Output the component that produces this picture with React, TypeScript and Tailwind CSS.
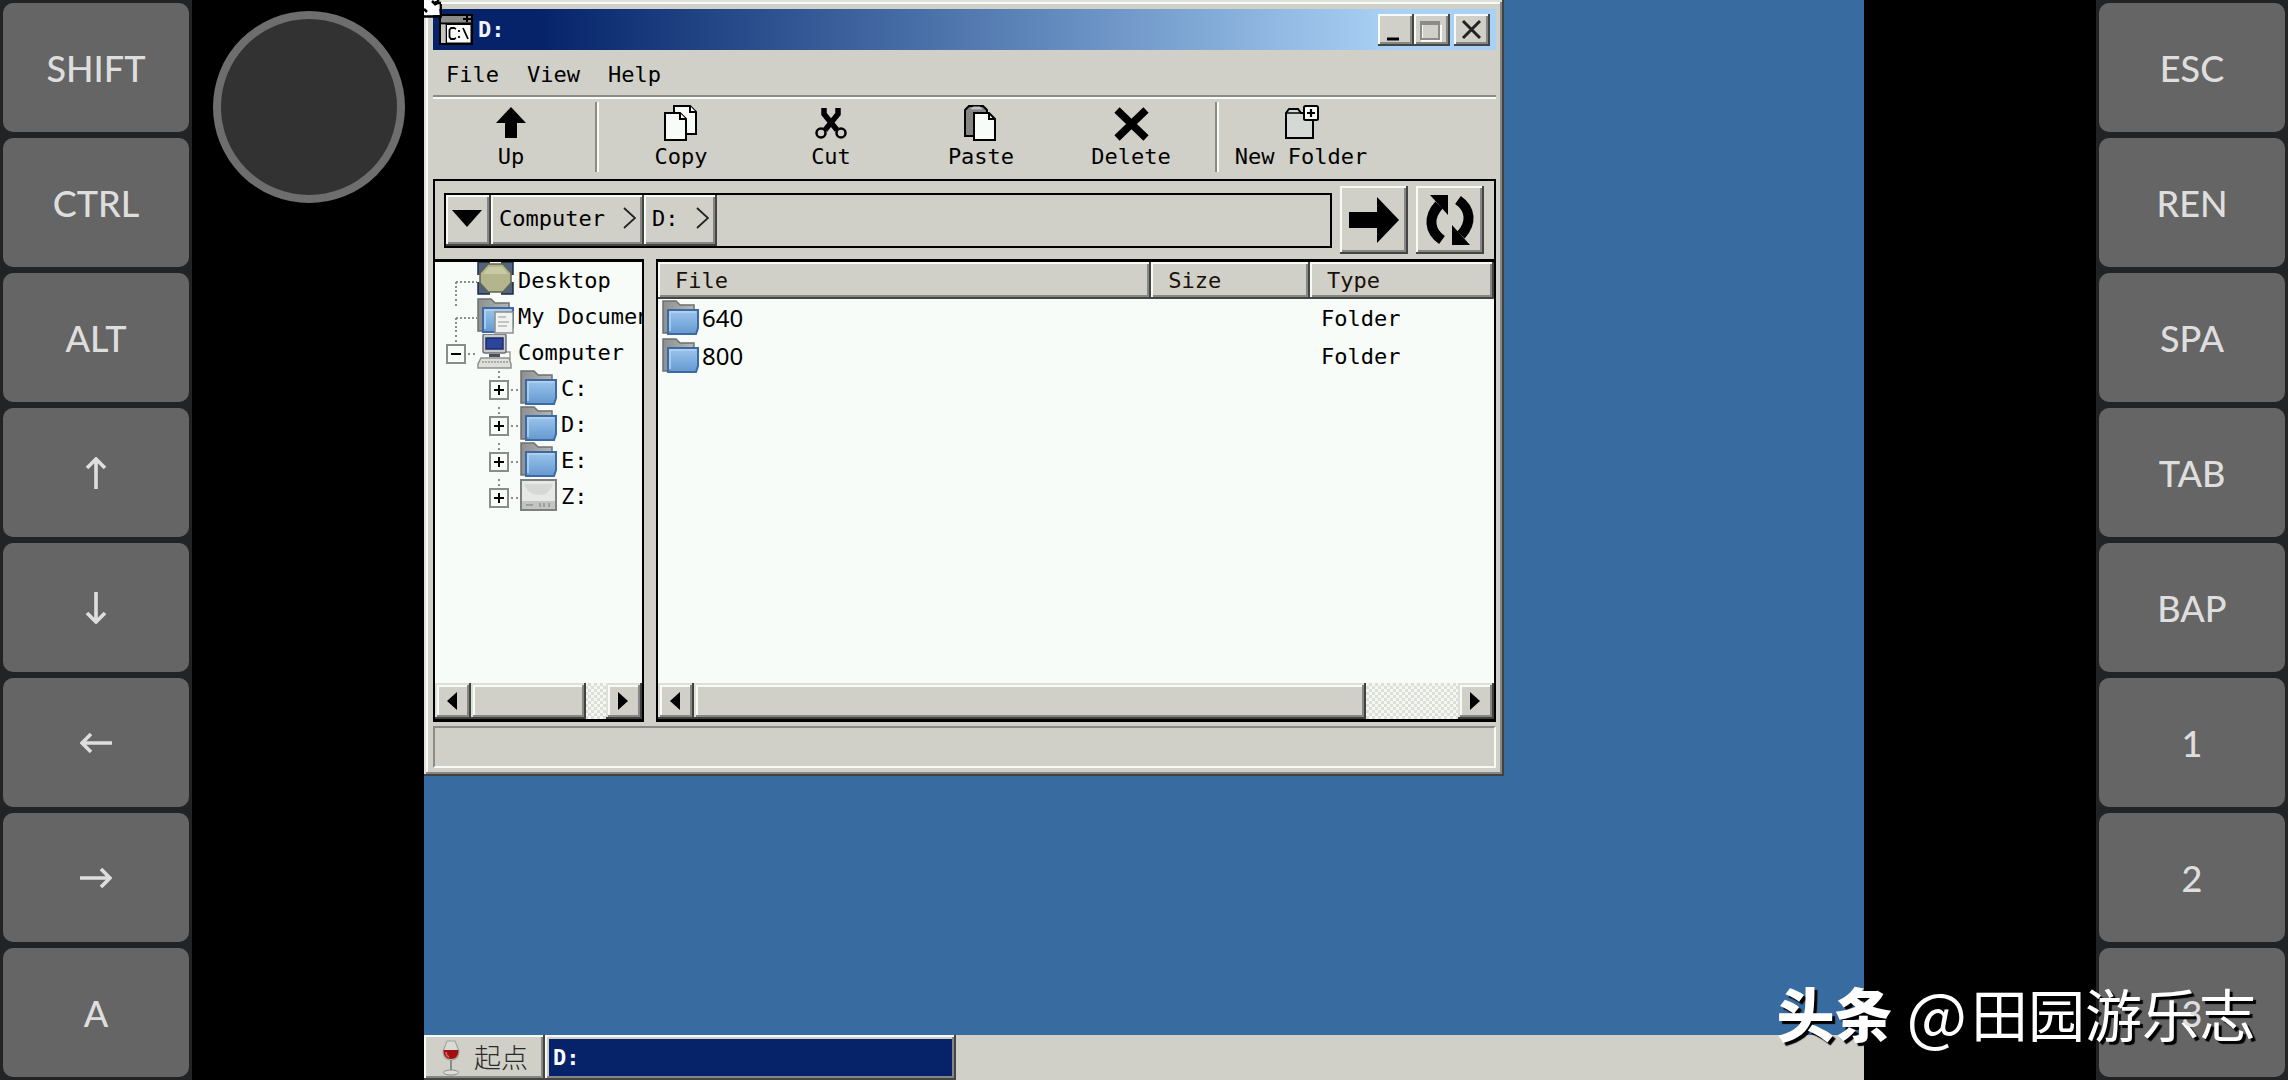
import { useState } from "react";
import type { ReactNode } from "react";
import clsx from "clsx";

const LEFT_KEYS = ["SHIFT", "CTRL", "ALT", "↑", "↓", "←", "→", "A"];
const RIGHT_KEYS = ["ESC", "REN", "SPA", "TAB", "BAP", "1", "2", "3"];

const ARROWS: Record<string, string> = {
  "↑": "M16 32V3M7 11l9-9 9 9",
  "↓": "M16 0v29M7 21l9 9 9-9",
  "←": "M32 16H3M11 7l-9 9 9 9",
  "→": "M0 16h29M21 7l9 9-9 9",
};

const FILES = [
  { name: "640", size: "", type: "Folder" },
  { name: "800", size: "", type: "Folder" },
];

const RAISED =
  "bg-[#d0d0c8] shadow-[inset_-2px_-2px_0_#404240,inset_2px_2px_0_#dedfd8,inset_-4px_-4px_0_#868784,inset_4px_4px_0_#f8fbf5]";
const BUTTON = "bg-[#d0d0c8] shadow-[inset_-2px_-2px_0_#444644,inset_2px_2px_0_#f8fbf5,inset_-4px_-4px_0_#868784]";

function KeyColumn({ keys }: { keys: string[] }) {
  return (
    <div className="w-48 shrink-0 grid grid-rows-8 gap-[6px] p-[3px] bg-[#222325]">
      {keys.map((k) => (
        <button key={k} aria-label={k} className="flex items-center justify-center rounded-[10px] bg-[#656565] text-[#dedede] text-4xl font-medium">
          <span className="relative z-20">
            {ARROWS[k] ? (
              <svg width="32" height="32" viewBox="0 0 32 32" fill="none" stroke="currentColor" strokeWidth="3.600">
                <path d={ARROWS[k]} />
              </svg>
            ) : (
              k
            )}
          </span>
        </button>
      ))}
    </div>
  );
}

/* ---- icons ---- */

function UpIcon() {
  return (
    <svg width="36" height="36" viewBox="0 0 36 36">
      <path d="M18 2l15 16h-9v15H12V18H3z" fill="#000" />
    </svg>
  );
}

function CopyIcon() {
  return (
    <svg width="36" height="36" viewBox="0 0 36 36" fill="#f8fcf8" stroke="#000" strokeWidth="2">
      <path d="M11 1h16l6 6v22H11z" />
      <path d="M27 1v6h6" />
      <path d="M2 8h15l6 6v21H2z" />
      <path d="M17 8v6h6" />
    </svg>
  );
}

function CutIcon() {
  return (
    <svg width="36" height="36" viewBox="0 0 36 36" fill="none" stroke="#000">
      <path d="M11 3v6l13 16M25 3v6L12 25" strokeWidth="5.500" />
      <circle cx="8" cy="28" r="4.500" strokeWidth="2.500" />
      <circle cx="28" cy="28" r="4.500" strokeWidth="2.500" />
    </svg>
  );
}

function PasteIcon() {
  return (
    <svg width="36" height="36" viewBox="0 0 36 36" stroke="#000" strokeWidth="2">
      <path d="M2 5l4-4h14l4 4v26H2z" fill="#858683" />
      <path d="M8 4l2-2h7l2 2z" fill="#d0d0c8" stroke="#b8b8b2" strokeWidth="1" />
      <path d="M11 8h15l6 6v21H11z" fill="#f8fcf8" />
      <path d="M26 8v6h6" fill="none" />
    </svg>
  );
}

function DeleteIcon() {
  return (
    <svg width="36" height="36" viewBox="0 0 36 36">
      <path d="M4 5l29 28M33 5L4 33" stroke="#000" strokeWidth="7.500" />
    </svg>
  );
}

function NewFolderIcon() {
  return (
    <svg width="36" height="36" viewBox="0 0 36 36" stroke="#000" strokeWidth="2">
      <path d="M3 33V8l3-4h9l3 4h12v25z" fill="#d5d9d6" />
      <path d="M4 8h14" strokeWidth="1.500" />
      <rect x="21" y="1" width="14" height="14" rx="1.500" fill="#f8fcf8" />
      <path d="M28 4v8M24 8h8" strokeWidth="2.200" />
    </svg>
  );
}

function FolderIcon({ doc = false }: { doc?: boolean }) {
  return (
    <svg className="shrink-0" width="37" height="36" viewBox="0 0 37 36">
      <defs>
        <linearGradient id="folderFront" x1="0" y1="0" x2="0" y2="1">
          <stop offset="0" stopColor="#9fc4ea" />
          <stop offset="0.5" stopColor="#7fb0e0" />
          <stop offset="1" stopColor="#6698cf" />
        </linearGradient>
        <linearGradient id="folderBack" x1="0" y1="0" x2="1" y2="0">
          <stop offset="0" stopColor="#8d8f90" />
          <stop offset="1" stopColor="#b5b7b7" />
        </linearGradient>
      </defs>
      <path d="M1 33V1h13l4 4h14v6H6v22z" fill="url(#folderBack)" stroke="#6d6f70" strokeWidth="1.500" />
      <path d="M6 10h30v18l-2 6H6z" fill="url(#folderFront)" stroke="#3b6aa5" strokeWidth="2" />
      <path d="M8 31V12h26" fill="none" stroke="#b6d3f0" strokeWidth="1.500" />
      {doc && (
        <g>
          <path d="M18 14h18v21H18z" fill="#f1f3f0" stroke="#8c8e8c" strokeWidth="1.500" />
          <path d="M21 19h8M21 24h11M21 28h9" stroke="#b4b6b3" strokeWidth="1.500" />
        </g>
      )}
    </svg>
  );
}

function DesktopIcon() {
  return (
    <svg className="shrink-0" width="37" height="36" viewBox="0 0 37 36">
      <path d="M1 0h35v32H1z" fill="#53627f" stroke="#1d2a45" strokeWidth="1.500" />
      <path d="M13 0h11v3H13zM13 29h11v4H13zM0 13h3v7H0zM34 13h3v7h-3z" fill="#f8fcf8" />
      <path d="M11 2h15l8 9v10l-8 9H11l-8-9V11z" fill="#b3b58c" stroke="#5e6350" strokeWidth="1.500" />
      <path d="M12 5h13l6 7H6z" fill="#c9caa4" />
    </svg>
  );
}

function ComputerIcon() {
  return (
    <svg className="shrink-0" width="37" height="36" viewBox="0 0 37 36">
      <path d="M27 18h6v8" fill="none" stroke="#9a9c99" strokeWidth="1.500" />
      <rect x="6" y="0" width="23" height="19" rx="2" fill="#c9cbd0" stroke="#6d7078" strokeWidth="1.500" />
      <rect x="9" y="4" width="17" height="11" fill="#2b459b" stroke="#1c2c66" strokeWidth="1.500" />
      <path d="M12 20h11v3H12z" fill="#4d4f52" />
      <path d="M4 24h28l2 6v4H1v-4z" fill="#dedfd9" stroke="#8f918e" strokeWidth="1.500" />
      <path d="M5 28h26" stroke="#a9aba8" strokeWidth="2" strokeDasharray="2 1" />
    </svg>
  );
}

function DriveIcon() {
  return (
    <svg className="shrink-0" width="37" height="36" viewBox="0 0 37 36">
      <rect x="1" y="2" width="35" height="30" fill="#e6e8e5" stroke="#7e807e" strokeWidth="2" />
      <path d="M4 6h29c-3 8-8 11-14 11S7 14 4 6z" fill="#d6d8d5" />
      <path d="M2 23h33v8H2z" fill="#c3c5c2" />
      <path d="M6 27h7M20 25v4M24 25v4M29 25v4" stroke="#9d9f9c" strokeWidth="2" />
    </svg>
  );
}

function ConsoleIcon() {
  return (
    <svg width="34" height="31" viewBox="0 0 34 31">
      <rect x="1" y="1" width="32" height="29" fill="#8a8b88" stroke="#000" strokeWidth="2" />
      <path d="M1 9.500h32" stroke="#000" strokeWidth="2" />
      <path d="M24 5h8M28 2v6" stroke="#000" strokeWidth="2" />
      <path d="M2 10.500h4V29H2z" fill="#c2c4c0" />
      <path d="M7.500 10.500H32V29H7.500z" fill="#f8fcf8" stroke="#000" />
      <path d="M17 15l-2-1h-3l-1.500 2v7l1.500 2h3l2-1M20 16v2M20 22v2M24 14l5 11" fill="none" stroke="#000" strokeWidth="1.800" />
    </svg>
  );
}

function WineIcon() {
  return (
    <svg width="18" height="36" viewBox="0 0 18 36">
      <path d="M5 1h8l4 10c0 6-3 9-8 9s-8-3-8-9z" fill="#d9dbd7" stroke="#a0a29f" strokeWidth="1.200" />
      <path d="M1.500 10h15c0 6-2.500 9-7.500 9s-7.500-3-7.500-9z" fill="#a01010" />
      <path d="M4 12c0 2 1 4 3 5" fill="none" stroke="#d96a6a" strokeWidth="1.500" />
      <path d="M9 20v12" stroke="#8b8d8a" strokeWidth="2" />
      <ellipse cx="9" cy="32.500" rx="7.500" ry="2.500" fill="#dcdeda" stroke="#8b8d8a" />
    </svg>
  );
}

function RefreshIcon() {
  return (
    <svg width="52" height="52" viewBox="0 0 52 52" fill="none" stroke="#000" strokeWidth="10">
      <path d="M18 46C5 37 4 23 15 11" />
      <path d="M34 6c13 9 14 23 3 35" />
      <path d="M6 1h18v20z" fill="#000" stroke="none" />
      <path d="M46 51H28V31z" fill="#000" stroke="none" />
    </svg>
  );
}

/* ---- window parts ---- */

function ToolButton({ label, children }: { label: string; children: ReactNode }) {
  return (
    <button className="w-[150px] flex flex-col items-center gap-1">
      {children}
      <span className="leading-6 whitespace-nowrap">{label}</span>
    </button>
  );
}

function ToolSeparator() {
  return <div className="w-1 h-[70px] ml-[9px] mr-[7px] border-l-2 border-r-2 border-l-[#8b8b88] border-r-[#f8fbf5]" />;
}

type Branch = "leaf" | "open" | "closed";

function TreeRow({ label, branch, child, first, icon }: { label: string; branch: Branch; child?: boolean; first?: boolean; icon: ReactNode }) {
  const lines = (
    <svg width="42" height="36" viewBox="0 0 42 36" fill="none" stroke="#8b8d8b" strokeWidth="2">
      {!(first && branch === "leaf") && <path d="M21 1v10" strokeDasharray="2 3" />}
      {branch === "leaf" ? (
        <path d="M21 20v16M21 20h21" strokeDasharray="2 2" />
      ) : (
        <>
          <path d="M33 20h9" strokeDasharray="2 3" />
          <rect x="12" y="11" width="18" height="18" />
          <path d="M16 20h10" stroke="#000" />
          {branch === "closed" && <path d="M21 15v10" stroke="#000" />}
        </>
      )}
    </svg>
  );
  return (
    <li className={clsx("flex items-center h-9 whitespace-nowrap", child && "pl-[43px]")}>
      {branch === "leaf" ? <span>{lines}</span> : <button aria-label={`Toggle ${label}`}>{lines}</button>}
      {icon}
      <a href="#" className="pl-1">{label}</a>
    </li>
  );
}

function HScroll({ thumb }: { thumb: string }) {
  return (
    <div className="flex h-9 shrink-0 bg-[repeating-conic-gradient(#dcded8_0_25%,#f4f7f2_0_50%)] bg-[length:6px_6px]">
      <button aria-label="Scroll left" className={clsx("w-9 shrink-0 flex items-center justify-center pr-[3px]", RAISED)}>
        <svg width="10" height="18" viewBox="0 0 10 18"><path d="M10 0v18L0 9z" /></svg>
      </button>
      <div className="flex-1">
        <div className={clsx("h-full", thumb, RAISED)} />
      </div>
      <button aria-label="Scroll right" className={clsx("w-9 shrink-0 flex items-center justify-center pr-[3px]", RAISED)}>
        <svg width="10" height="18" viewBox="0 0 10 18"><path d="M0 0v18l10-9z" /></svg>
      </button>
    </div>
  );
}

function TitleBar() {
  return (
    <header className="flex items-center h-[41px] pl-[6px] pr-[6px] bg-linear-to-r from-[#06236a] from-10% to-[#a9d1f5] to-90%">
      <ConsoleIcon />
      <h1 className="flex-1 pl-[5px] font-bold text-[#f0f4ff]">D:</h1>
      <button aria-label="Minimize" className={clsx("w-9 h-8", BUTTON)}>
        <svg width="36" height="32" viewBox="0 0 36 32"><path d="M9 25h12" stroke="#000" strokeWidth="3" /></svg>
      </button>
      <button aria-label="Maximize" className={clsx("w-9 h-8 mr-1", BUTTON)}>
        <svg width="36" height="32" viewBox="0 0 36 32" fill="none">
          <path d="M8 11v16h19V11" stroke="#f8fbf5" strokeWidth="2" />
          <path d="M7 10v15h18V10" stroke="#8b8b88" strokeWidth="2" />
          <path d="M6 9h20" stroke="#8b8b88" strokeWidth="4" />
        </svg>
      </button>
      <button aria-label="Close" className={clsx("w-9 h-8", BUTTON)}>
        <svg width="36" height="32" viewBox="0 0 36 32"><path d="M9 7l17 17M26 7L9 24" stroke="#222" strokeWidth="3" /></svg>
      </button>
    </header>
  );
}

function Crumb({ label }: { label: string }) {
  return (
    <button className={clsx("flex items-center gap-[18px] pl-2 pr-2 pb-1", BUTTON)}>
      {label}
      <svg width="13" height="22" viewBox="0 0 13 22" fill="none" stroke="#222" strokeWidth="1.800">
        <path d="M1 1l11 10L1 21" />
      </svg>
    </button>
  );
}

function Explorer() {
  const [files] = useState(FILES);
  return (
    <section className={clsx("relative w-3/4 p-[9px] pb-2 pr-2", RAISED)}>
      <TitleBar />

      <nav className="flex items-center gap-7 h-[45px] pt-1 px-[13px]">
        <button>File</button>
        <button>View</button>
        <button>Help</button>
      </nav>
      <div className="h-1 border-t-2 border-b-2 border-t-[#8b8b88] border-b-[#f8fbf5]" />

      <div className="flex items-center h-[80px] pl-[3px] pb-1">
        <ToolButton label="Up"><UpIcon /></ToolButton>
        <ToolSeparator />
        <ToolButton label="Copy"><CopyIcon /></ToolButton>
        <ToolButton label="Cut"><CutIcon /></ToolButton>
        <ToolButton label="Paste"><PasteIcon /></ToolButton>
        <ToolButton label="Delete"><DeleteIcon /></ToolButton>
        <ToolSeparator />
        <ToolButton label="New Folder"><NewFolderIcon /></ToolButton>
      </div>

      <div className="flex items-center gap-2 h-20 pl-[9px] pr-[10px] border-2 border-black border-b-0">
        <div className="flex flex-1 h-[55px] border-2 border-black">
          <button aria-label="History" className={clsx("w-[45px] flex items-center justify-center pr-1 pb-1", BUTTON)}>
            <svg width="30" height="17" viewBox="0 0 30 17"><path d="M0 0h30L15 17z" /></svg>
          </button>
          <Crumb label="Computer" />
          <Crumb label="D:" />
        </div>
        <button aria-label="Go" className={clsx("w-[68px] h-[68px] flex items-center justify-center", BUTTON)}>
          <svg width="50" height="46" viewBox="0 0 50 46"><path d="M0 15h28V0l22 23-22 23V31H0z" /></svg>
        </button>
        <button aria-label="Refresh" className={clsx("w-[68px] h-[68px] flex items-center justify-center", BUTTON)}>
          <RefreshIcon />
        </button>
      </div>

      <div className="flex gap-3 h-[463px]">
        <div className="w-[211px] shrink-0 flex flex-col border-2 border-t-3 border-b-3 border-black bg-[#f8fcf8]">
          <ul className="flex-1 overflow-hidden">
            <TreeRow label="Desktop" branch="leaf" first icon={<DesktopIcon />} />
            <TreeRow label="My Documents" branch="leaf" icon={<FolderIcon doc />} />
            <TreeRow label="Computer" branch="open" icon={<ComputerIcon />} />
            <TreeRow label="C:" branch="closed" child icon={<FolderIcon />} />
            <TreeRow label="D:" branch="closed" child icon={<FolderIcon />} />
            <TreeRow label="E:" branch="closed" child icon={<FolderIcon />} />
            <TreeRow label="Z:" branch="closed" child icon={<DriveIcon />} />
          </ul>
          <HScroll thumb="w-[85%]" />
        </div>

        <div className="flex-1 min-w-0 flex flex-col border-2 border-t-3 border-b-3 border-black bg-[#f8fcf8]">
          <div className="flex-1">
            <table className="w-full table-fixed text-left">
              <thead>
                <tr className="h-[37px] text-[#1c100c]">
                  <th className={clsx("w-[59%] pl-[17px] font-normal", BUTTON)}>File</th>
                  <th className={clsx("w-[19%] pl-[17px] font-normal", BUTTON)}>Size</th>
                  <th className={clsx("pl-[17px] font-normal", BUTTON)}>Type</th>
                </tr>
              </thead>
              <tbody>
                {files.map((f) => (
                  <tr key={f.name} className="h-[38px]">
                    <td className="pl-1">
                      <a href="#" className="flex items-center gap-[3px] font-['Noto_Sans',sans-serif] text-2xl leading-9">
                        <FolderIcon />
                        {f.name}
                      </a>
                    </td>
                    <td>{f.size}</td>
                    <td className="pl-[11px]">{f.type}</td>
                  </tr>
                ))}
              </tbody>
            </table>
          </div>
          <HScroll thumb="w-[88%]" />
        </div>
      </div>

      <footer className="mt-1 h-[42px] border-2 border-t-[#8b8b88] border-l-[#8b8b88] border-b-[#f8fbf5] border-r-[#f8fbf5]" />

      {/* mouse pointer parked in the corner */}
      <svg className="absolute left-0 top-0" width="18" height="18" viewBox="0 0 18 18">
        <path d="M0 0h14v1l2 14H0z" fill="#fff" />
        <path d="M0 16.500h17V4M14 0v3h3" fill="none" stroke="#000" strokeWidth="2.500" />
        <path d="M0 9l3 3M8 1l4 4M12 1v4" fill="none" stroke="#000" strokeWidth="2.500" />
      </svg>
    </section>
  );
}

function Taskbar() {
  return (
    <footer className="flex h-[45px] bg-[#d0d0c8]">
      <button className={clsx("w-[121px] flex items-center gap-[14px] pl-[18px] font-['Noto_Sans_CJK_SC',sans-serif] text-[27px] font-light text-[#2a2a28]", BUTTON)}>
        <WineIcon />
        起点
      </button>
      <button className={clsx("w-[411px] p-1", BUTTON)}>
        <span className="flex items-center h-full pl-1 bg-[#06236a] font-bold text-white">D:</span>
      </button>
    </footer>
  );
}

export default function App() {
  return (
    <div className="relative flex h-screen overflow-hidden bg-black font-['Lato',sans-serif]">
      <KeyColumn keys={LEFT_KEYS} />

      <div className="w-[232px] shrink-0 pt-[11px] pl-[21px]">
        <button aria-label="Joystick" className="block size-48 rounded-full border-8 border-[#6e6e6e] bg-[#323232]" />
      </div>

      <main className="flex-1 min-w-0 flex flex-col justify-between bg-[#386ba0] font-['DejaVu_Sans_Mono',monospace] text-[22px] text-black">
        <Explorer />
        <Taskbar />
      </main>

      <div className="w-[232px] shrink-0" />
      <KeyColumn keys={RIGHT_KEYS} />

      <p className="absolute right-8 bottom-7 z-10 flex items-center leading-[80px] text-white whitespace-nowrap font-['Noto_Sans_CJK_SC',sans-serif] [text-shadow:3px_3px_1px_#000]">
        <b className="text-[58px] font-black">头条</b>
        <span className="pl-[14px] text-[64px]">@</span>
        <span className="pl-1 text-[57px]">田园游乐志</span>
      </p>
    </div>
  );
}
